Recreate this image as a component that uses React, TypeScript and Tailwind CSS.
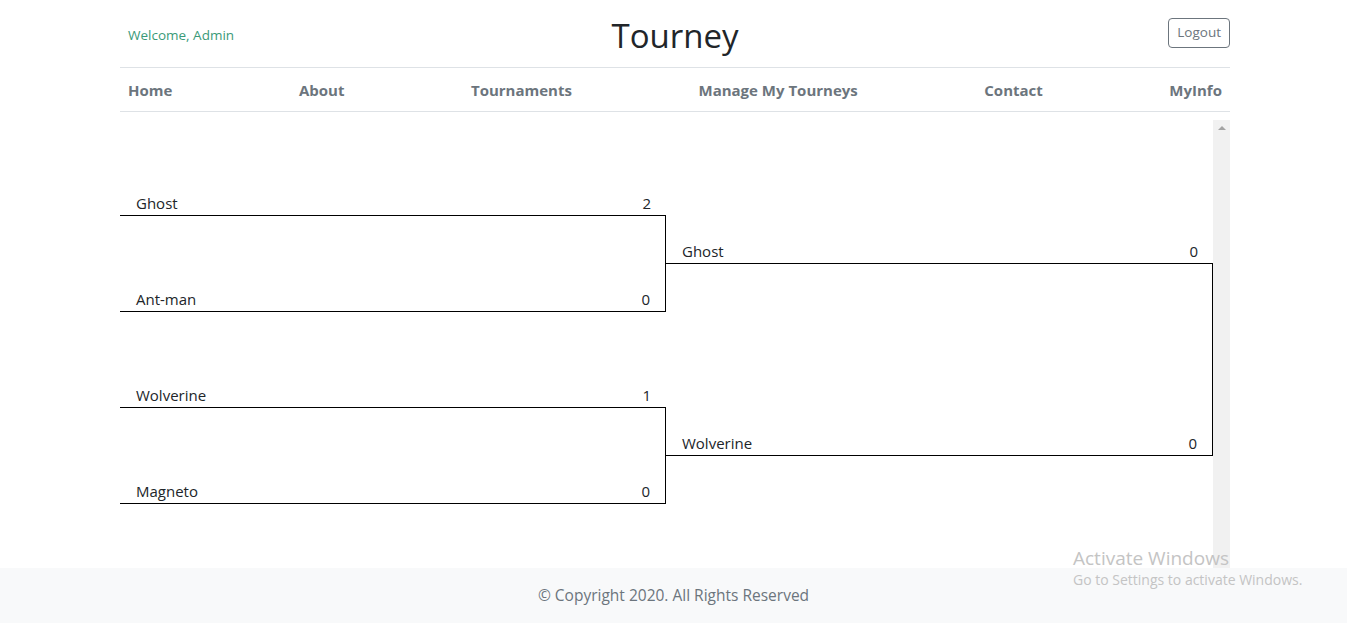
import React from 'react'

type Team = { name: string; score: number }

const round1: Team[][] = [
  [{ name: 'Ghost', score: 2 }, { name: 'Ant-man', score: 0 }],
  [{ name: 'Wolverine', score: 1 }, { name: 'Magneto', score: 0 }],
]

const round2: Team[] = [{ name: 'Ghost', score: 0 }, { name: 'Wolverine', score: 0 }]

function TeamRow({ team }: { team: Team }) {
  return (
    <div className="flex h-[25px] items-center justify-between border-b border-black pl-4 pr-[15px] text-[15px] text-[#212529]">
      <span>{team.name}</span>
      <span>{team.score}</span>
    </div>
  )
}

function Match({ teams, gap }: { teams: Team[]; gap: string }) {
  return (
    <div>
      <TeamRow team={teams[0]} />
      <div className="border-r border-black">
        <div className={gap}></div>
        <TeamRow team={teams[1]} />
      </div>
    </div>
  )
}

export default function App() {
  const links = ['Home', 'About', 'Tournaments', 'Manage My Tourneys', 'Contact', 'MyInfo']

  return (
    <div className="relative min-h-[623px] bg-white" style={{ fontFamily: '"Open Sans", "Noto Sans", sans-serif' }}>
      <div className="ml-[120px] w-[1110px]">
        {/* header */}
        <div className="grid h-[68px] grid-cols-3 items-center border-b border-[#dee2e6]">
          <div className="pl-2 pt-[4px] text-[13.5px] text-[#3a9a78]">Welcome, Admin</div>
          <div className="pt-[4px] text-center text-[33px] leading-none text-[#212529]">Tourney</div>
          <div className="flex justify-end pb-[2px]">
            <button className="h-[30px] rounded border border-[#6c757d] px-2 text-[13.5px] text-[#6c757d]">Logout</button>
          </div>
        </div>

        {/* nav */}
        <div className="flex h-[44px] items-center justify-between border-b border-[#dee2e6] px-2 pt-[2px]">
          {links.map((l) => (
            <a key={l} className="text-[15px] font-bold text-[#6c757d]">{l}</a>
          ))}
        </div>

        {/* bracket */}
        <div className="mt-2 flex h-[448px]">
          <div className="flex flex-1">
            <div className="w-[546px] pt-[71px]">
              <Match teams={round1[0]} gap="h-[71px]" />
              <div className="h-[71px]"></div>
              <Match teams={round1[1]} gap="h-[71px]" />
            </div>
            <div className="w-[547px] pt-[119px]">
              <Match teams={round2} gap="h-[167px]" />
            </div>
          </div>
          <div className="w-[17px] bg-[#f1f1f1]">
            <div className="mx-auto mt-[6px] h-0 w-0 border-x-[4px] border-b-[4px] border-x-transparent border-b-[#a3a3a3]"></div>
          </div>
        </div>
      </div>

      {/* footer */}
      <div className="flex h-[55px] items-center justify-center bg-[#f8f9fa] pt-[1px] text-[15.5px] text-[#6c757d]">
        © Copyright 2020. All Rights Reserved
      </div>

      {/* windows watermark */}
      <div className="pointer-events-none absolute left-[1073px] top-[546px] text-[#c4c4c4]">
        <div className="text-[19px] leading-[24px]">Activate Windows</div>
        <div className="text-[14px] leading-[20px]">Go to Settings to activate Windows.</div>
      </div>
    </div>
  )
}
